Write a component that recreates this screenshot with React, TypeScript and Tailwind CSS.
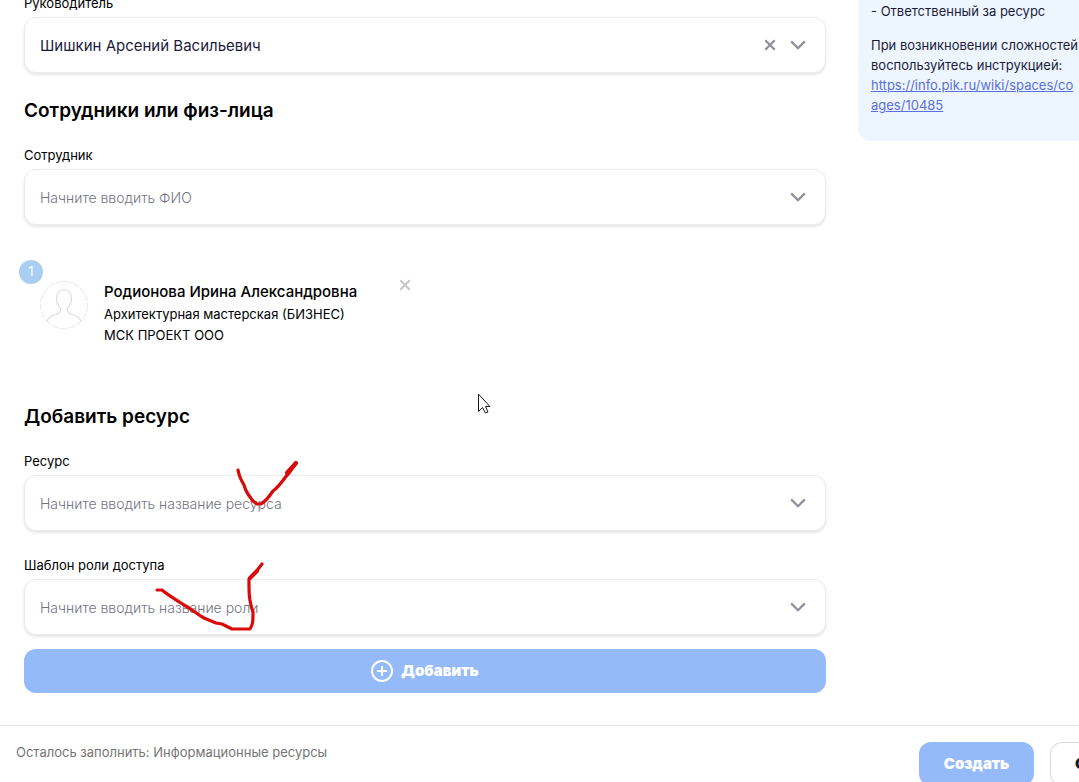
import React from "react";

const CrossIcon = () => (
  <svg viewBox="0 0 12 12" className="h-3 w-3" fill="none" stroke="currentColor" strokeWidth="2.2">
    <path d="M1.3 1.3 10.7 10.7M10.7 1.3 1.3 10.7" />
  </svg>
);

const ChevronIcon = () => (
  <svg viewBox="0 0 16 10" className="h-[10px] w-4" fill="none" stroke="currentColor" strokeWidth="2.2">
    <path d="M1.2 1.4 8 8.2l6.8-6.8" />
  </svg>
);

type FieldProps = {
  id: string;
  label: string;
  placeholder?: string;
  value?: string;
};

const Field = ({ id, label, placeholder, value }: FieldProps) => (
  <div>
    <label htmlFor={id} className="mb-1 block text-[13px] leading-5 text-black">
      {label}
    </label>
    <div className="flex h-14 items-center gap-[14px] rounded-xl border border-[#ebebeb] bg-white pr-[19px] pl-[15px] text-[#8e8e9c] shadow-[0_2px_3px_rgba(0,0,0,0.1)]">
      <input
        id={id}
        type="text"
        defaultValue={value}
        placeholder={placeholder}
        className="min-w-0 flex-1 bg-transparent pt-0.5 text-[15px] text-[#1c1c3a] outline-none placeholder:text-sm placeholder:font-light placeholder:text-[#737384]"
      />
      {value && (
        <button type="button" aria-label="Очистить">
          <CrossIcon />
        </button>
      )}
      <button type="button" aria-label="Открыть список">
        <ChevronIcon />
      </button>
    </div>
  </div>
);

const Avatar = () => (
  <svg viewBox="0 0 48 48" className="h-12 w-12" fill="none">
    <circle cx="24" cy="24" r="23.5" stroke="#e9e4f5" strokeDasharray="7 1.5" />
    <path
      d="M6.5 40.5c2-4 5.500-5.800 9-6.800 4-1.200 5.100-2.700 5.100-5.200 0-1.700-1.800-2.600-2.500-5.700-1.500-.7-2.200-3.800-1.300-5C16.300 12.500 18.500 9 24 9s7.700 3.500 7.200 8.800c.9 1.200.2 4.300-1.300 5-.7 3.100-2.500 4-2.500 5.700 0 2.500 1.100 4 5.100 5.200 3.500 1 7 2.800 9 6.800"
      stroke="#dedede"
      strokeWidth="1.2"
    />
  </svg>
);

const Employee = () => (
  <div className="mt-14 flex items-start pl-4">
    <div className="relative mr-4">
      <Avatar />
      <span className="absolute -top-[21px] -left-[21px] flex h-6 w-6 items-center justify-center rounded-full bg-[#a8cef2] text-[13px] text-white">
        1
      </span>
    </div>
    <div className="text-[13px] leading-[21px] text-black">
      <p className="mb-px text-[15px] leading-[22px] font-medium">Родионова Ирина Александровна</p>
      <p>Архитектурная мастерская (БИЗНЕС)</p>
      <p>МСК ПРОЕКТ ООО</p>
    </div>
    <button type="button" aria-label="Удалить" className="-mt-0.5 ml-[42px] text-[#c8c8c8]">
      <CrossIcon />
    </button>
  </div>
);

const Pen = () => (
  <svg
    viewBox="0 0 500 660"
    className="pointer-events-none absolute top-0 left-0 h-[660px] w-[500px]"
    fill="none"
    stroke="#d90a0a"
    strokeWidth="3.2"
    strokeLinecap="round"
    strokeLinejoin="round"
  >
    <path d="M238 470c1 6 3 10 6 15 2 8 6 12 9 16l4 3h4c5-3 8-7 12-13 7-5 11-13 16-18l7-10" />
    <path d="M287 473l9-10" strokeWidth="4.2" />
    <path d="M157 590h5c7 6 15 10 22 15 9 5 13 9 20 13l12 5 6 1 10 5h18c3-5 3-7 3-17-3-8-4-14-4-24v-9l6-6 7-9" />
    <path d="M250 578l7-7" strokeWidth="4" />
    {/* mouse pointer */}
    <path
      d="M478.500 394.500v17l4-4 3 5.500 2.500-1-2.500-5.500h4z"
      fill="#fff"
      stroke="#14142b"
      strokeWidth="1"
    />
  </svg>
);

const App = () => {
  return (
    <div className="h-screen overflow-hidden bg-white font-[Inter,'Liberation_Sans',sans-serif]">
      <main className="relative flex gap-8 pb-8 pl-6">
        <form className="-mt-[7px] min-w-0 flex-1">
          <Field id="manager" label="Руководитель" value="Шишкин Арсений Васильевич" />

          <h2 className="mt-6 mb-5 text-[19px] leading-7 font-semibold text-black">
            Сотрудники или физ-лица
          </h2>
          <Field id="employee" label="Сотрудник" placeholder="Начните вводить ФИО" />
          <Employee />

          <h2 className="mt-[57px] mb-5 text-[19px] leading-7 font-semibold text-black">
            Добавить ресурс
          </h2>
          <div className="flex flex-col gap-6">
            <Field id="resource" label="Ресурс" placeholder="Начните вводить название ресурса" />
            <Field id="role" label="Шаблон роли доступа" placeholder="Начните вводить название роли" />
          </div>

          <button
            type="button"
            className="mt-[14px] flex h-11 w-full items-center justify-center gap-2 rounded-xl bg-[#95baf9] text-[15px] font-black text-white"
          >
            <svg viewBox="0 0 22 22" className="h-[22px] w-[22px]" fill="none" stroke="currentColor" strokeWidth="2">
              <circle cx="11" cy="11" r="10" />
              <path d="M11 6v10M6 11h10" />
            </svg>
            Добавить
          </button>
        </form>

        <aside className="w-[221px] shrink-0">
          <div className="h-[141px] w-[280px] rounded-b-xl bg-[#edf6ff] px-[13px] pt-px text-[13px] leading-5 whitespace-nowrap text-[#1c1c3a]">
            <p>- Ответственный за ресурс</p>
            <p className="mt-[14px]">
              При возникновении сложностей
              <br />
              воспользуйтесь инструкцией:
              <br />
              <a href="https://info.pik.ru/wiki" className="text-[#5b70d8] underline">
                https://info.pik.ru/wiki/spaces/co
                <br />
                ages/10485
              </a>
            </p>
          </div>
        </aside>

        <Pen />
      </main>

      <footer className="flex items-start gap-4 border-t border-[#e8e8e8] py-4 pl-4">
        <p className="flex-1 text-[13px] leading-5 text-[#757575]">
          Осталось заполнить: Информационные ресурсы
        </p>
        <button type="button" className="h-11 w-[115px] rounded-xl bg-[#95baf9] text-[15px] font-black text-white">
          Создать
        </button>
        <div className="w-[29px] shrink-0">
          <button type="button" className="h-11 rounded-xl border border-[#d5d5d5] px-6 text-[15px] font-black text-[#14142b]">
            Отмена
          </button>
        </div>
      </footer>
    </div>
  );
};

export default App;
